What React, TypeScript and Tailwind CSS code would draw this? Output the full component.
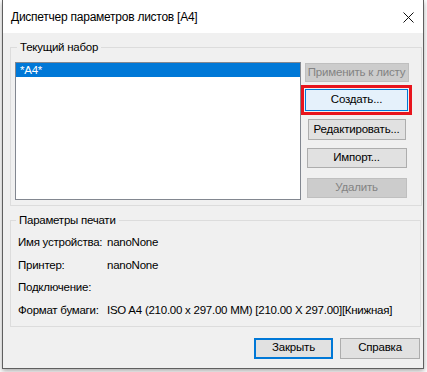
const font = { fontFamily: '"Liberation Sans", Arial, sans-serif' };

const btnBase =
  "h-full flex items-center justify-center text-[11.5px] tracking-[-0.2px] leading-none border whitespace-nowrap";

const Button = ({
  label,
  variant = "normal",
  className = "",
}: {
  label: string;
  variant?: "normal" | "disabled" | "hover" | "default";
  className?: string;
}) => {
  const styles = {
    normal: "bg-[#e1e1e1] border-[#adadad] text-black",
    disabled: "bg-[#cccccc] border-[#bfbfbf] text-[#838383]",
    hover: "bg-[#e5f1fb] border-[#0078d7] text-black",
    default: "bg-[#e1e1e1] border-2 border-[#0078d7] text-black",
  }[variant];
  return (
    <button className={`${btnBase} ${styles} ${className}`} type="button">
      {label}
    </button>
  );
};

const Row = ({ label, value }: { label: string; value?: string }) => (
  <div className="flex leading-[15px] h-[15px] whitespace-nowrap">
    <span className="w-[89px] shrink-0">{label}</span>
    <span>{value}</span>
  </div>
);

export default function App() {
  return (
    <div
      className="w-[427px] h-[372px] bg-white text-black text-[11.5px] tracking-[-0.25px] overflow-hidden"
      style={font}
    >
      <div className="ml-[2px] w-[422px] h-[369px] border-x border-b border-[#5f5f5f] shadow-[0_2px_5px_rgba(0,0,0,0.35)] flex flex-col">
        {/* Title bar */}
        <div className="h-[33px] bg-white flex items-center justify-between pl-[8px] pr-[9px] shrink-0">
          <span className="text-[12px] leading-[15px] mt-[2px] tracking-[-0.25px]">
            Диспетчер параметров листов [A4]
          </span>
          <svg width="11" height="11" viewBox="0 0 11 11" className="mt-[2px]">
            <path d="M0.5 0.5 L10.5 10.5 M10.5 0.5 L0.5 10.5" stroke="#111" strokeWidth="1" />
          </svg>
        </div>

        {/* Body */}
        <div className="flex-1 bg-[#f0f0f0] pl-[7px] pr-[2px] flex flex-col">
          {/* Current set */}
          <fieldset className="mt-[7px] border border-[#dcdcdc] pl-[4px] pr-[9px] pt-[7px] pb-[5px]">
            <legend className="ml-[2px] px-[3px] leading-[15px]">Текущий набор</legend>
            <div className="flex">
              <div className="w-[286px] h-[138px] bg-white border border-[#828790]">
                <div className="h-[14px] bg-[#0078d7] text-white leading-[14px] pl-[4px]">
                  *A4*
                </div>
              </div>
              <div className="flex-1 flex flex-col items-center pt-[1px]">
                <div className="h-[19px] w-[104px]">
                  <Button label="Применить к листу" variant="disabled" className="w-full" />
                </div>
                <div className="mt-[3px] h-[30px] w-[111px] border-[3px] border-[#e8141c] p-[1px]">
                  <Button label="Создать..." variant="hover" className="w-full" />
                </div>
                <div className="mt-[4px] h-[21px] w-[98px]">
                  <Button label="Редактировать..." className="w-full" />
                </div>
                <div className="mt-[8px] h-[20px] w-[100px]">
                  <Button label="Импорт..." className="w-full" />
                </div>
                <div className="mt-[10px] h-[20px] w-[100px]">
                  <Button label="Удалить" variant="disabled" className="w-full" />
                </div>
              </div>
            </div>
          </fieldset>

          {/* Print parameters */}
          <fieldset className="mt-[7px] border border-[#dcdcdc] pl-[7px] pt-[7px] pb-[8px]">
            <legend className="ml-[-2px] px-[3px] leading-[15px]">Параметры печати</legend>
            <div className="flex flex-col gap-[7.5px]">
              <Row label="Имя устройства:" value="nanoNone" />
              <Row label="Принтер:" value="nanoNone" />
              <Row label="Подключение:" />
              <Row
                label="Формат бумаги:"
                value="ISO A4 (210.00 x 297.00 MM) [210.00 X 297.00][Книжная]"
              />
            </div>
          </fieldset>

          {/* Footer buttons */}
          <div className="mt-[11px] h-[21px] flex justify-end gap-[7px] pr-[1px]">
            <div className="w-[79px] h-full">
              <Button label="Закрыть" variant="default" className="w-full" />
            </div>
            <div className="w-[80px] h-full">
              <Button label="Справка" className="w-full" />
            </div>
          </div>
        </div>
      </div>
    </div>
  );
}
